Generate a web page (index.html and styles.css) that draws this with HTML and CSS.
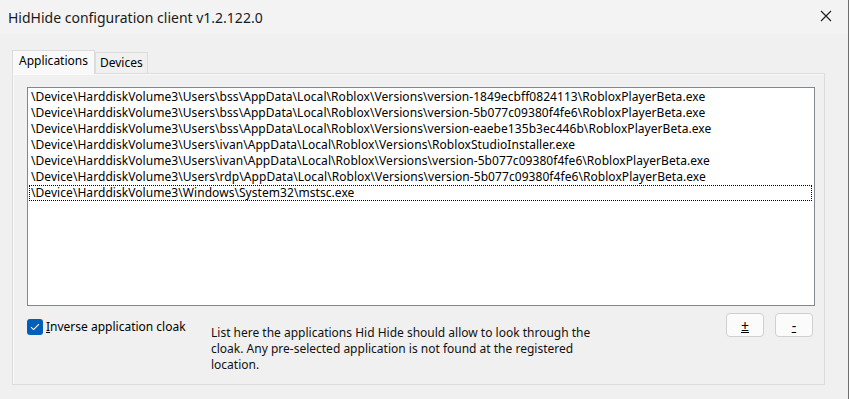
FILE: index.html
```html
<!DOCTYPE html>
<html lang="en">
<head>
    <meta charset="UTF-8">
    <title>HidHide configuration client v1.2.122.0</title>
    <link rel="stylesheet" href="styles.css">
</head>
<body>
    <div class="window">
        <!-- Title bar -->
        <div class="titlebar">
            <span class="title">HidHide configuration client v1.2.122.0</span>
            <span class="close">
                <svg width="12" height="12" viewBox="0 0 12 12">
                    <path d="M1 1 L11 11 M11 1 L1 11" stroke="#1a1a1a" stroke-width="1.1" fill="none"/>
                </svg>
            </span>
        </div>

        <div class="content">
            <!-- Tabs -->
            <div class="tabs">
                <div class="tab active">Applications</div>
                <div class="tab">Devices</div>
            </div>

            <div class="panel">
                <!-- Application list -->
                <div class="listbox">
                    <div class="row">\Device\HarddiskVolume3\Users\bss\AppData\Local\Roblox\Versions\version-1849ecbff0824113\RobloxPlayerBeta.exe</div>
                    <div class="row">\Device\HarddiskVolume3\Users\bss\AppData\Local\Roblox\Versions\version-5b077c09380f4fe6\RobloxPlayerBeta.exe</div>
                    <div class="row">\Device\HarddiskVolume3\Users\bss\AppData\Local\Roblox\Versions\version-eaebe135b3ec446b\RobloxPlayerBeta.exe</div>
                    <div class="row">\Device\HarddiskVolume3\Users\ivan\AppData\Local\Roblox\Versions\RobloxStudioInstaller.exe</div>
                    <div class="row">\Device\HarddiskVolume3\Users\ivan\AppData\Local\Roblox\Versions\version-5b077c09380f4fe6\RobloxPlayerBeta.exe</div>
                    <div class="row">\Device\HarddiskVolume3\Users\rdp\AppData\Local\Roblox\Versions\version-5b077c09380f4fe6\RobloxPlayerBeta.exe</div>
                    <div class="row focused">\Device\HarddiskVolume3\Windows\System32\mstsc.exe</div>
                </div>

                <!-- Bottom controls -->
                <div class="controls">
                    <label class="check">
                        <span class="box">
                            <svg width="10" height="8" viewBox="0 0 10 8">
                                <path d="M1 4.2 L3.6 6.6 L9 1.2" stroke="#fff" stroke-width="1.1" fill="none"/>
                            </svg>
                        </span>
                        <span><u>I</u>nverse application cloak</span>
                    </label>
                    <p class="desc">List here the applications Hid Hide should allow to look through the cloak. Any pre-selected application is not found at the registered location.</p>
                    <div class="buttons">
                        <button class="btn"><u>±</u></button>
                        <button class="btn"><u>-</u></button>
                    </div>
                </div>
            </div>
        </div>
    </div>
</body>
</html>
```

FILE: styles.css
```css
/* Base */
body {
    margin: 0;
    font-family: "Noto Sans", "Liberation Sans", sans-serif;
    font-size: 12px;
    color: #000;
    background: #f0f0f0;
}

.window {
    width: 848px;
    height: 399px;
    border-right: 1px solid #6e6e6e;
    background: #f0f0f0;
    overflow: hidden;
}

/* Title bar */
.titlebar {
    height: 34px;
    background: #f3f3f3;
    display: flex;
    align-items: center;
    justify-content: space-between;
    padding: 0 16px 0 8px;
}

.title {
    font-size: 14px;
    color: #1a1a1a;
}

.close {
    display: flex;
    margin-top: -2px;
}

/* Tab control */
.content {
    padding: 16px 23px 0 12px;
}

.tabs {
    display: flex;
    align-items: flex-end;
    height: 23px;
    position: relative;
    z-index: 1;
}

.tab {
    height: 20px;
    line-height: 20px;
    padding: 0 4px;
    border: 1px solid #dcdcdc;
    border-bottom: none;
    background: #f0f0f0;
}

.tab.active {
    height: 23px;
    line-height: 20px;
    padding: 0 6px;
    background: #f9f9f9;
    margin-bottom: -1px;
}

.panel {
    height: 312px;
    box-sizing: border-box;
    border: 1px solid #dcdcdc;
    box-shadow: inset 1px 1px 0 #fafafa;
    padding: 13px 9px 0 14px;
}

/* List of applications */
.listbox {
    height: 219px;
    box-sizing: border-box;
    border: 1px solid #828790;
    background: #fff;
    padding: 1px 2px 0 1px;
}

.row {
    height: 16px;
    line-height: 16px;
    padding-left: 2px;
    letter-spacing: 0.06px;
    white-space: nowrap;
    overflow: hidden;
    box-sizing: border-box;
}

.row.focused {
    outline: 1px dotted #000;
    outline-offset: -1px;
}

/* Controls under the list */
.controls {
    display: flex;
    align-items: flex-start;
    margin-top: 7px;
}

.check {
    display: flex;
    align-items: center;
    gap: 3px;
    width: 184px;
    margin-top: 6px;
    line-height: 16px;
}

.box {
    width: 16px;
    height: 16px;
    border-radius: 3px;
    background: #005fb8;
    display: flex;
    align-items: center;
    justify-content: center;
}

.desc {
    width: 400px;
    margin: 12px 0 0 0;
    line-height: 16px;
    color: #111;
}

.buttons {
    display: flex;
    gap: 11px;
    margin-left: auto;
    margin-right: 2px;
}

.btn {
    width: 38px;
    height: 24px;
    border: 1px solid #d0d0d0;
    border-radius: 4px;
    background: #fbfbfb;
    font-family: inherit;
    font-size: 14px;
    color: #000;
    padding: 0;
}
```
